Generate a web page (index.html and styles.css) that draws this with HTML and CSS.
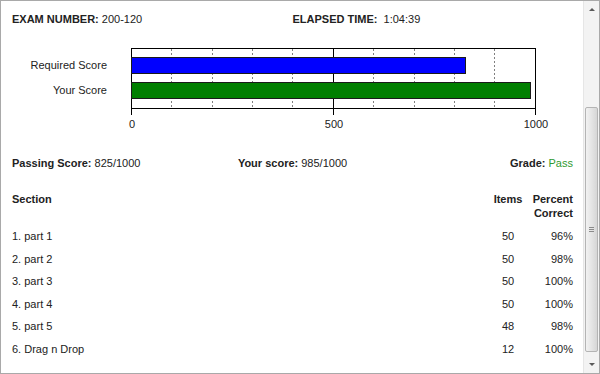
FILE: index.html
```html
<!DOCTYPE html>
<html>
<head>
<meta charset="utf-8">
<link rel="stylesheet" href="styles.css">
</head>
<body>
<div class="window">
  <div class="content">
    <div class="exam-row">
      <div><b>EXAM NUMBER:</b> 200-120</div>
      <div><b>ELAPSED TIME:</b>&nbsp; 1:04:39</div>
    </div>

    <svg class="chart" width="561" height="92" viewBox="12 40 561 92">
      <g class="grid">
        <line x1="171.5" y1="49" x2="171.5" y2="108"/>
        <line x1="212.5" y1="49" x2="212.5" y2="108"/>
        <line x1="252.5" y1="49" x2="252.5" y2="108"/>
        <line x1="292.5" y1="49" x2="292.5" y2="108"/>
        <line x1="373.5" y1="49" x2="373.5" y2="108"/>
        <line x1="414.5" y1="49" x2="414.5" y2="108"/>
        <line x1="454.5" y1="49" x2="454.5" y2="108"/>
        <line x1="494.5" y1="49" x2="494.5" y2="108"/>
      </g>
      <rect class="frame" x="131.5" y="48.5" width="404" height="60"/>
      <line class="axis" x1="333.5" y1="48" x2="333.5" y2="115"/>
      <line class="axis" x1="131.5" y1="108" x2="131.5" y2="115"/>
      <line class="axis" x1="535.5" y1="108" x2="535.5" y2="115"/>
      <rect class="bar bar-req" x="131.5" y="57.5" width="334" height="16"/>
      <rect class="bar bar-you" x="131.5" y="82.5" width="399" height="16"/>
      <text class="lbl" x="107" y="69" text-anchor="end">Required Score</text>
      <text class="lbl" x="107" y="94" text-anchor="end">Your Score</text>
      <text class="lbl" x="132" y="128" text-anchor="middle">0</text>
      <text class="lbl" x="334" y="128" text-anchor="middle">500</text>
      <text class="lbl" x="536" y="128" text-anchor="middle">1000</text>
    </svg>

    <div class="score-row">
      <div class="left"><b>Passing Score:</b> 825/1000</div>
      <div class="mid"><b>Your score:</b> 985/1000</div>
      <div class="right"><b>Grade:</b> <span class="pass">Pass</span></div>
    </div>

    <div class="table">
      <div class="th">Section</div>
      <div class="th c">Items</div>
      <div class="th r">Percent<br>Correct</div>
    </div>
    <div class="rows">
      <div class="row"><span>1. part 1</span><span class="c">50</span><span class="r">96%</span></div>
      <div class="row"><span>2. part 2</span><span class="c">50</span><span class="r">98%</span></div>
      <div class="row"><span>3. part 3</span><span class="c">50</span><span class="r">100%</span></div>
      <div class="row"><span>4. part 4</span><span class="c">50</span><span class="r">100%</span></div>
      <div class="row"><span>5. part 5</span><span class="c">48</span><span class="r">98%</span></div>
      <div class="row"><span>6. Drag n Drop</span><span class="c">12</span><span class="r">100%</span></div>
    </div>
  </div>

  <div class="scrollbar">
    <div class="arrow up"></div>
    <div class="track">
      <div class="thumb"><div class="grip"></div></div>
    </div>
    <div class="arrow down"></div>
  </div>
</div>
</body>
</html>
```

FILE: styles.css
```css
* { box-sizing: border-box; }
html, body { margin: 0; padding: 0; background: #fff; }
body {
  font-family: "Liberation Sans", Arial, sans-serif;
  font-size: 11px;
  line-height: 14px;
  color: #222;
}
.window {
  width: 600px;
  height: 374px;
  border: 1px solid #a9a9a9;
  display: flex;
  overflow: hidden;
}
.content {
  flex: 1;
  padding: 11px 10px 0 11px;
}
.exam-row {
  display: grid;
  grid-template-columns: 1fr 1fr;
}
.chart {
  display: block;
  margin-top: 14px;
}
.chart .grid line {
  stroke: #808080;
  stroke-width: 1;
  stroke-dasharray: 2 2;
}
.chart .frame { fill: none; stroke: #000; stroke-width: 1; }
.chart .axis { stroke: #000; stroke-width: 1; }
.chart .bar { stroke: #1a1a1a; stroke-width: 1; }
.chart .bar-req { fill: #0000ff; }
.chart .bar-you { fill: #007f00; }
.chart .lbl {
  font-family: "Liberation Sans", Arial, sans-serif;
  font-size: 11px;
  fill: #222;
}
.score-row {
  display: grid;
  grid-template-columns: 1fr 1fr 1fr;
  margin-top: 24px;
}
.score-row .mid { text-align: center; white-space: nowrap; }
.score-row .right { text-align: right; }
.pass { color: #2f9a2f; }
.table, .row {
  display: grid;
  grid-template-columns: 1fr 30px 50px;
}
.table { margin-top: 22px; }
.th { font-weight: bold; }
.c { text-align: center; }
.r { text-align: right; }
.rows { margin-top: 5px; }
.row {
  height: 22.5px;
  align-items: center;
}
.scrollbar {
  width: 16px;
  background: #f3f3f3;
  border-left: 1px solid #e6e6e6;
  display: flex;
  flex-direction: column;
}
.arrow {
  height: 17px;
  display: flex;
  align-items: center;
  justify-content: center;
}
.arrow::before {
  content: "";
  width: 0;
  height: 0;
  border-left: 3px solid transparent;
  border-right: 3px solid transparent;
}
.arrow.up::before { border-bottom: 3px solid #5a5a5a; }
.arrow.down::before { border-top: 3px solid #5a5a5a; }
.track {
  flex: 1;
  padding: 89px 1px 4px 1px;
  display: flex;
}
.thumb {
  flex: 1;
  border: 1px solid #b4b4b4;
  border-radius: 2px;
  background: linear-gradient(to right, #f2f2f2, #e2e2e2 60%, #d6d6d6);
  display: flex;
  align-items: center;
  justify-content: center;
}
.grip {
  width: 5px;
  height: 5px;
  border-top: 1px solid #8a8a8a;
  border-bottom: 1px solid #8a8a8a;
  position: relative;
}
.grip::after {
  content: "";
  position: absolute;
  left: 0;
  right: 0;
  top: 1px;
  border-top: 1px solid #8a8a8a;
}
```
